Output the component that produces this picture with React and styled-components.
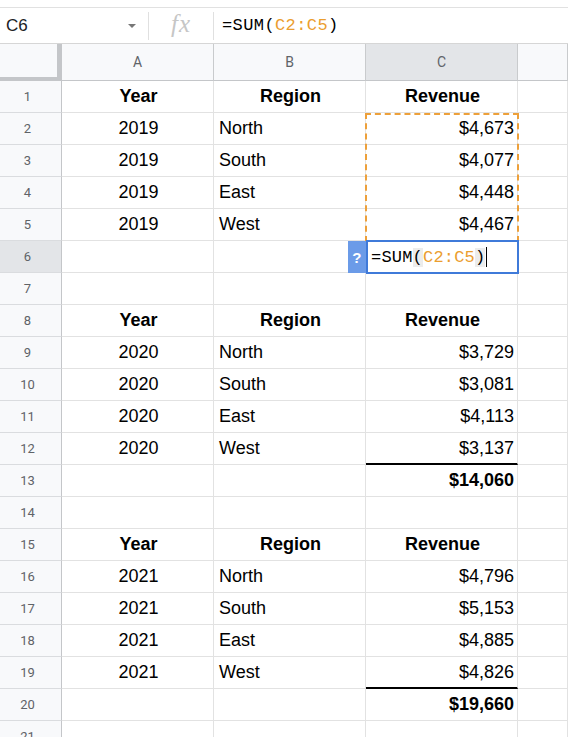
import React from "react";
import styled, { createGlobalStyle } from "styled-components";

const GlobalStyle = createGlobalStyle`
  html, body {
    margin: 0;
    padding: 0;
    background: #fff;
    overflow: hidden;
  }
  body {
    font-family: "Liberation Sans", Arial, sans-serif;
  }
`;

const Page = styled.div`
  width: 568px;
  height: 737px;
  overflow: hidden;
  padding-top: 7px;
  box-sizing: border-box;
`;

const FormulaBar = styled.div`
  display: flex;
  align-items: center;
  height: 37px;
  border-top: 1px solid #e1e1e1;
  border-bottom: 1px solid #d6d6d6;
  box-sizing: border-box;
`;

const NameBox = styled.div`
  display: flex;
  align-items: center;
  justify-content: space-between;
  width: 148px;
  padding: 0 12px 0 6px;
  font-size: 17px;
  color: #202124;
  box-sizing: border-box;
`;

const Caret = styled.span`
  width: 0;
  height: 0;
  border-left: 4px solid transparent;
  border-right: 4px solid transparent;
  border-top: 4px solid #777;
`;

const Divider = styled.div`
  width: 1px;
  height: 28px;
  background: #e0e0e0;
`;

const Fx = styled.div`
  width: 64px;
  text-align: center;
  font-family: "Liberation Serif", "Times New Roman", serif;
  font-style: italic;
  font-size: 25px;
  color: #c6c6c6;
  letter-spacing: 1px;
  line-height: 1;
  margin-top: -4px;
`;

const FormulaText = styled.div`
  padding-left: 8px;
  font-family: "Liberation Mono", "DejaVu Sans Mono", monospace;
  font-size: 17px;
  letter-spacing: 0.4px;
  color: #000;
`;

const Ref = styled.span`
  color: #eb9e2f;
`;

const Paren = styled.span`
  background: ${({ $hl }) => ($hl ? "#ececec" : "transparent")};
`;

const Grid = styled.div`
  display: grid;
  grid-template-columns: 62px 152px 152px 152px 1fr;
  grid-template-rows: 37px repeat(21, 32px);
`;

const Corner = styled.div`
  grid-row: 1;
  grid-column: 1;
  background: #f8f9fb;
  border-right: 5px solid #c4c6c9;
  border-bottom: 4px solid #c4c6c9;
  box-sizing: border-box;
`;

const ColHead = styled.div`
  grid-row: 1;
  grid-column: ${({ $col }) => $col};
  display: flex;
  align-items: center;
  justify-content: center;
  font-family: Roboto, "Liberation Sans", sans-serif;
  font-size: 14px;
  color: #5f6368;
  background: ${({ $active }) => ($active ? "#e3e5e8" : "#f8f9fb")};
  border-right: 1px solid #c9cbcd;
  border-bottom: 1px solid #c4c6c9;
  box-sizing: border-box;
`;

const RowHead = styled.div`
  grid-row: ${({ $row }) => $row};
  grid-column: 1;
  display: flex;
  align-items: center;
  justify-content: center;
  padding-right: 6px;
  font-family: Roboto, "Liberation Sans", sans-serif;
  font-size: 13px;
  color: #5f6368;
  background: ${({ $active }) => ($active ? "#e3e5e8" : "#f8f9fb")};
  border-right: 1px solid #c4c6c9;
  border-bottom: 1px solid #dadcdf;
  box-sizing: border-box;
`;

const Cell = styled.div`
  grid-row: ${({ $row }) => $row};
  grid-column: ${({ $col }) => $col};
  display: flex;
  align-items: center;
  justify-content: ${({ $align }) =>
    $align === "center" ? "center" : $align === "right" ? "flex-end" : "flex-start"};
  padding: 0 3px 0 5px;
  font-size: 18px;
  font-weight: ${({ $bold }) => ($bold ? 700 : 400)};
  color: #000;
  border-right: 1px solid #e2e2e2;
  border-bottom: ${({ $total }) => ($total ? "2px solid #000" : "1px solid #e2e2e2")};
  box-sizing: border-box;
  white-space: nowrap;
`;

const RangeMark = styled.div`
  grid-row: 3 / 7;
  grid-column: 4;
  margin: 0 -1px -1px -1px;
  border: 2px dashed #eda03a;
  pointer-events: none;
  z-index: 2;
`;

const Editor = styled.div`
  grid-row: 7;
  grid-column: 4;
  position: relative;
  display: flex;
  align-items: center;
  margin: -1px -1px -1px 0;
  padding-left: 3px;
  border: 2px solid #3f7ad9;
  background: #fff;
  font-family: "Liberation Mono", "DejaVu Sans Mono", monospace;
  font-size: 17px;
  letter-spacing: 0.2px;
  color: #000;
  z-index: 3;
`;

const Cursor = styled.span`
  display: inline-block;
  width: 1px;
  height: 20px;
  background: #000;
  margin-left: 1px;
`;

const HelpBadge = styled.div`
  position: absolute;
  left: -20px;
  top: -1px;
  bottom: -1px;
  width: 18px;
  display: flex;
  align-items: center;
  justify-content: center;
  background: #6b9be8;
  color: #fff;
  font-family: "Liberation Sans", Arial, sans-serif;
  font-weight: 700;
  font-size: 15px;
`;

const blocks = [
  { start: 1, year: 2019, values: ["$4,673", "$4,077", "$4,448", "$4,467"], total: null },
  { start: 8, year: 2020, values: ["$3,729", "$3,081", "$4,113", "$3,137"], total: "$14,060" },
  { start: 15, year: 2021, values: ["$4,796", "$5,153", "$4,885", "$4,826"], total: "$19,660" },
];
const regions = ["North", "South", "East", "West"];

function buildRows() {
  const rows = {};
  blocks.forEach((b) => {
    rows[b.start] = [
      { text: "Year", align: "center", bold: true },
      { text: "Region", align: "center", bold: true },
      { text: "Revenue", align: "center", bold: true },
    ];
    regions.forEach((r, i) => {
      rows[b.start + 1 + i] = [
        { text: String(b.year), align: "center" },
        { text: r, align: "left" },
        { text: b.values[i], align: "right", total: i === 3 && !!b.total },
      ];
    });
    if (b.total) {
      rows[b.start + 5] = [null, null, { text: b.total, align: "right", bold: true }];
    }
  });
  return rows;
}

const rows = buildRows();

export default function App() {
  const nums = Array.from({ length: 21 }, (_, i) => i + 1);
  return (
    <Page>
      <GlobalStyle />
      <FormulaBar>
        <NameBox>
          <span>C6</span>
          <Caret />
        </NameBox>
        <Divider />
        <Fx>fx</Fx>
        <Divider />
        <FormulaText>
          =SUM(<Ref>C2:C5</Ref>)
        </FormulaText>
      </FormulaBar>
      <Grid>
        <Corner />
        <ColHead $col={2}>A</ColHead>
        <ColHead $col={3}>B</ColHead>
        <ColHead $col={4} $active>C</ColHead>
        <ColHead $col={5} />
        {nums.map((n) => {
          const data = rows[n] || [null, null, null];
          return (
            <React.Fragment key={n}>
              <RowHead $row={n + 1} $active={n === 6}>{n}</RowHead>
              {data.map((c, i) => (
                <Cell
                  key={i}
                  $row={n + 1}
                  $col={i + 2}
                  $align={c ? c.align : "left"}
                  $bold={c && c.bold}
                  $total={c && c.total}
                >
                  {c ? c.text : ""}
                </Cell>
              ))}
              <Cell $row={n + 1} $col={5} />
            </React.Fragment>
          );
        })}
        <RangeMark />
        <Editor>
          <HelpBadge>?</HelpBadge>
          <span>
            =SUM<Paren $hl>(</Paren>
            <Ref>C2:C5</Ref>
            <Paren $hl>)</Paren>
          </span>
          <Cursor />
        </Editor>
      </Grid>
    </Page>
  );
}
